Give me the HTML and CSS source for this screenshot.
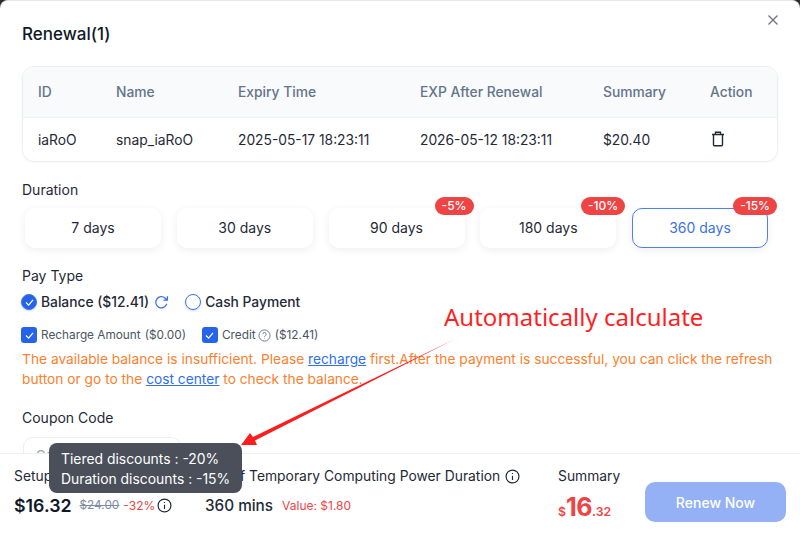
FILE: index.html
```html
<!DOCTYPE html>
<html lang="en">
<head>
    <meta charset="UTF-8">
    <meta name="viewport" content="width=device-width, initial-scale=1.0">
    <title>Renewal</title>
    <link rel="stylesheet" href="styles.css">
</head>
<body>
<div class="modal">
    <div class="modal-body">
        <div class="modal-head">
            <h2>Renewal(1)</h2>
            <svg class="close-icon" viewBox="0 0 12 12"><path d="M1.5 1.5l9 9M10.5 1.5l-9 9"/></svg>
        </div>

        <div class="table">
            <div class="row head-row">
                <span>ID</span><span>Name</span><span>Expiry Time</span><span>EXP After Renewal</span><span>Summary</span><span>Action</span>
            </div>
            <div class="row data-row">
                <span>iaRoO</span><span>snap_iaRoO</span><span>2025-05-17 18:23:11</span><span>2026-05-12 18:23:11</span><span>$20.40</span>
                <span><svg class="trash-icon" viewBox="0 0 14 16"><path d="M1 3.5h12M4.5 3.5V1.2h5v2.3M2.5 3.5v10.3a1 1 0 0 0 1 1h7a1 1 0 0 0 1-1V3.5"/></svg></span>
            </div>
        </div>

        <div class="label duration-label">Duration</div>
        <div class="durations">
            <div class="duration">7 days</div>
            <div class="duration">30 days</div>
            <div class="duration">90 days<span class="badge">-5%</span></div>
            <div class="duration">180 days<span class="badge">-10%</span></div>
            <div class="duration active">360 days<span class="badge">-15%</span></div>
        </div>

        <div class="label pay-label">Pay Type</div>
        <div class="pay-row">
            <span class="radio checked"><svg viewBox="0 0 10 8"><path d="M1 4l3 3 5-6"/></svg></span>
            <span class="pay-text">Balance ($12.41)</span>
            <svg class="refresh-icon" viewBox="0 0 16 16"><path d="M13.6 9.5A6 6 0 1 1 12 3.4l2 1.9M14.3 1.2v4.2h-4.2"/></svg>
            <span class="radio"></span>
            <span class="pay-text">Cash Payment</span>
        </div>
        <div class="check-row">
            <span class="check"><svg viewBox="0 0 10 8"><path d="M1 4l3 3 5-6"/></svg></span>
            <span class="check-text">Recharge Amount</span>
            <span class="check-text amount">($0.00)</span>
            <span class="check second"><svg viewBox="0 0 10 8"><path d="M1 4l3 3 5-6"/></svg></span>
            <span class="check-text">Credit</span>
            <svg class="help-icon" viewBox="0 0 14 14"><circle cx="7" cy="7" r="6"/><path d="M5.2 5.5a1.8 1.8 0 1 1 2.7 1.6c-.6.3-.9.7-.9 1.3"/><path d="M7 10v.6"/></svg>
            <span class="check-text">($12.41)</span>
        </div>
        <p class="warning">The available balance is insufficient. Please <a href="#">recharge</a> first.After the payment is successful, you can click the refresh button or go to the <a href="#">cost center</a> to check the balance.</p>

        <div class="label coupon-label">Coupon Code</div>
        <div class="coupon-input">Coupon code not us</div>
    </div>

    <div class="footer">
        <div class="cost-col">
            <div class="foot-label">Setup Costs</div>
            <div class="foot-values">
                <span class="price">$16.32</span>
                <span class="old-price">$24.00</span>
                <span class="off">-32%</span>
                <svg class="info-icon" viewBox="0 0 14 14"><circle cx="7" cy="7" r="6"/><path d="M7 6.2v4M7 3.8v.8"/></svg>
            </div>
        </div>
        <div class="gift-col">
            <div class="foot-label">Gift of Temporary Computing Power Duration
                <svg class="info-icon" viewBox="0 0 14 14"><circle cx="7" cy="7" r="6"/><path d="M7 6.2v4M7 3.8v.8"/></svg>
            </div>
            <div class="foot-values">
                <span class="mins">360 mins</span>
                <span class="off value">Value: $1.80</span>
            </div>
        </div>
        <div class="sum-col">
            <div class="foot-label">Summary</div>
            <div class="total"><span class="cur">$</span><span class="big">16</span><span class="cur">.32</span></div>
        </div>
        <button class="renew">Renew Now</button>
    </div>

    <div class="tooltip">
        <div>Tiered discounts : -20%</div>
        <div>Duration discounts : -15%</div>
    </div>
</div>

<div class="note">Automatically calculate</div>
<svg class="arrow" viewBox="0 0 800 535"><polygon points="455,339 255,440.5 257,445 241,445 250,433 253,437"/></svg>
</body>
</html>
```

FILE: styles.css
```css
body {
    margin: 0;
    width: 800px;
    height: 535px;
    overflow: hidden;
    background: #2b2b2b;
    font-family: 'Inter', 'Liberation Sans', sans-serif;
    color: #1f2430;
}

.modal {
    position: relative;
    display: flex;
    flex-direction: column;
    box-sizing: border-box;
    height: 535px;
    background: #fff;
    border-top: 1px solid #e7e8ef;
    border-radius: 8px 8px 0 0;
    overflow: hidden;
}

.modal-body {
    flex: 1;
    min-height: 0;
    overflow: hidden;
    padding: 0 22px;
}

.modal-head {
    display: flex;
    justify-content: space-between;
    height: 65px;
}

h2 {
    margin: 22px 0 0;
    font-size: 17px;
    line-height: 22px;
    font-weight: 500;
    color: #111827;
}

.close-icon {
    width: 12px;
    height: 12px;
    margin: 13px -1px 0 0;
    fill: none;
    stroke: #6b7280;
    stroke-width: 1.3;
}

.table {
    border: 1px solid #eceef3;
    border-radius: 12px;
    overflow: hidden;
    box-shadow: 0 1px 2px rgba(0, 0, 0, 0.04);
}

.row {
    display: grid;
    grid-template-columns: 78px 122px 182px 183px 107px 1fr;
    align-items: center;
    padding-left: 15px;
    font-size: 13.8px;
}

.head-row {
    height: 51px;
    padding-bottom: 1px;
    background: #f9fafb;
    color: #64748b;
    font-weight: 500;
    border-bottom: 1px solid #f1f2f5;
    box-sizing: border-box;
}

.data-row {
    height: 43px;
    color: #1f2937;
}

.trash-icon {
    display: block;
    width: 14px;
    height: 16px;
    margin: 0 0 1px 1px;
    fill: none;
    stroke: #1f2937;
    stroke-width: 1.4;
}

.label {
    font-size: 14px;
    line-height: 18px;
    color: #1f2937;
}

.duration-label {
    margin-top: 19px;
}

.durations {
    display: flex;
    gap: 15.75px;
    margin: 9px 0 0 3px;
}

.duration {
    position: relative;
    display: flex;
    align-items: center;
    justify-content: center;
    box-sizing: border-box;
    width: 136px;
    height: 40px;
    padding-bottom: 1px;
    border-radius: 10px;
    font-size: 14px;
    color: #1f2937;
    background: #fff;
    box-shadow: 0 2px 8px rgba(0, 0, 0, 0.07);
}

.duration.active {
    border: 1px solid #4f80ee;
    color: #3b72ea;
}

.badge {
    position: absolute;
    top: -11px;
    right: -9px;
    padding: 0 7px;
    height: 18px;
    line-height: 17px;
    border-radius: 9px;
    background: #ef4444;
    color: #fff;
    font-size: 12px;
    font-weight: 500;
}

.duration.active .badge {
    top: -12px;
    right: -10px;
}

.pay-label {
    margin-top: 19px;
}

.pay-row {
    display: flex;
    align-items: center;
    height: 20px;
    margin: 7px 0 0 -1px;
}

.radio {
    display: flex;
    align-items: center;
    justify-content: center;
    box-sizing: border-box;
    width: 16px;
    height: 16px;
    border-radius: 50%;
    border: 1px solid #3b72ea;
    box-shadow: 0 1px 2px rgba(37, 99, 235, 0.25);
}

.radio.checked {
    background: #2563eb;
}

.radio svg, .check svg {
    width: 9px;
    height: 7px;
    fill: none;
    stroke: #fff;
    stroke-width: 1.4;
}

.pay-text {
    margin-left: 4px;
    font-size: 13.8px;
    font-weight: 450;
    color: #1f2937;
}

.refresh-icon {
    width: 15px;
    height: 15px;
    margin: 0 16px 0 5px;
    fill: none;
    stroke: #3b72ea;
    stroke-width: 1.4;
}

.check-row {
    display: flex;
    align-items: center;
    height: 16px;
    margin: 15px 0 0 -1px;
}

.check {
    display: flex;
    align-items: center;
    justify-content: center;
    width: 16px;
    height: 16px;
    border-radius: 3px;
    background: #2563eb;
}

.check.second {
    margin-left: 16px;
}

.check-text {
    margin-left: 4px;
    font-size: 11.8px;
    color: #4b5563;
}

.help-icon {
    width: 13px;
    height: 13px;
    margin-left: 2px;
    fill: none;
    stroke: #64748b;
    stroke-width: 1;
}

.warning {
    margin: 6px 0 0;
    font-size: 13.76px;
    line-height: 20px;
    color: #fb7f2e;
}

.warning a {
    color: #2f6fed;
}

.coupon-label {
    margin-top: 20px;
}

.coupon-input {
    box-sizing: border-box;
    width: 158px;
    height: 36px;
    margin: 10px 0 0 1px;
    padding: 9px 12px;
    border: 1px solid #eceef3;
    border-radius: 10px;
    font-size: 13px;
    color: #9ca3af;
}

.footer {
    display: flex;
    align-items: flex-start;
    flex-shrink: 0;
    box-sizing: border-box;
    height: 82px;
    padding: 0 14px;
    border-top: 1px solid #eff0f2;
    background: #fff;
}

.foot-label {
    display: flex;
    align-items: center;
    gap: 5px;
    margin-top: 13px;
    font-size: 13.85px;
    line-height: 18px;
    color: #1f2937;
    white-space: nowrap;
}

.foot-values {
    display: flex;
    align-items: center;
    height: 24px;
    margin-top: 8px;
}

.cost-col {
    width: 191px;
}

.gift-col {
    width: 353px;
}

.sum-col {
    flex: 1;
}

.price {
    font-size: 17.8px;
    font-weight: 600;
    color: #111827;
}

.old-price {
    margin-left: 8px;
    font-size: 11.8px;
    color: #7c8ba1;
    text-decoration: line-through;
}

.off {
    margin-left: 4px;
    font-size: 12px;
    color: #ef4444;
}

.info-icon {
    width: 15px;
    height: 15px;
    margin-left: 2px;
    fill: none;
    stroke: #1f2937;
    stroke-width: 1.1;
}

.foot-label .info-icon {
    margin-left: 0;
}

.mins {
    font-size: 15.3px;
    font-weight: 500;
    color: #1f2937;
}

.value {
    margin-left: 9px;
}

.total {
    margin-top: 5px;
    color: #ef4444;
    font-weight: 600;
    font-size: 12.3px;
    line-height: 34px;
}

.big {
    font-size: 25px;
    font-weight: 700;
    letter-spacing: -0.5px;
}

.renew {
    width: 141px;
    height: 40px;
    margin-top: 28px;
    border: none;
    border-radius: 10px;
    background: #93b1f4;
    color: #fff;
    font-family: inherit;
    font-size: 14px;
    font-weight: 500;
}

.tooltip {
    position: absolute;
    left: 49px;
    top: 442px;
    width: 193px;
    height: 50px;
    box-sizing: border-box;
    padding: 6px 12px;
    border-radius: 8px;
    background: #4a4f5a;
    color: #fff;
    font-size: 13.9px;
    line-height: 20px;
    white-space: nowrap;
}

.note {
    position: absolute;
    left: 444px;
    top: 300px;
    font-family: 'Noto Sans', sans-serif;
    font-size: 24px;
    line-height: 33px;
    color: #ff1f1f;
    white-space: nowrap;
}

.arrow {
    position: absolute;
    left: 0;
    top: 0;
    width: 800px;
    height: 535px;
    fill: #fa1e1e;
    pointer-events: none;
}
```
